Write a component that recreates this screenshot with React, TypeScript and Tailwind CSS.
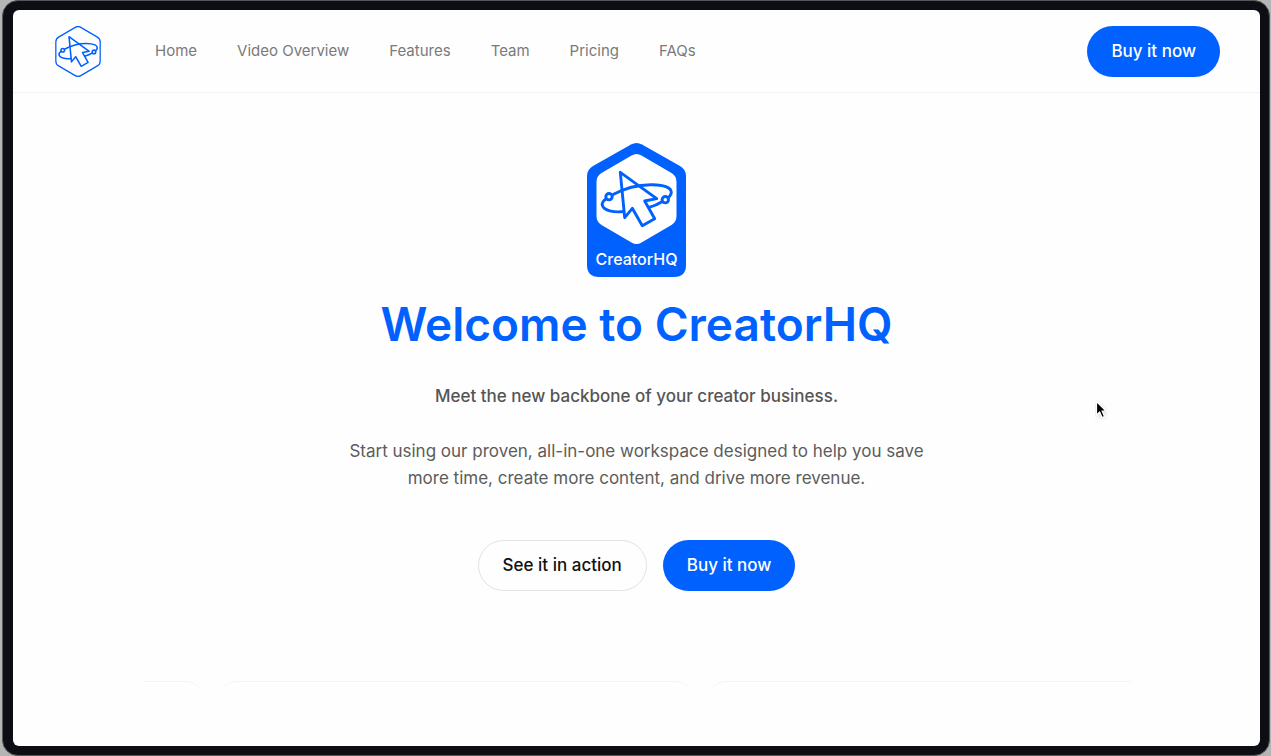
import { Star } from 'lucide-react';

const navLinks = [
  { label: 'Home', href: '#home' },
  { label: 'Video Overview', href: '#video' },
  { label: 'Features', href: '#features' },
  { label: 'Team', href: '#team' },
  { label: 'Pricing', href: '#pricing' },
  { label: 'FAQs', href: '#faqs' },
];

const hexagon =
  'M44.5 12.5Q49.5 9.5 54.5 12.5L84.5 30Q89.5 33 89.5 39V73Q89.5 79 84.5 82L54.5 99.5Q49.5 102.5 44.5 99.5L14.5 82Q9.5 79 9.5 73V39Q9.5 33 14.5 30Z';

function OrbitCursor() {
  return (
    <g fill="none" stroke="#0061ff" strokeLinejoin="round">
      <path d="M33.3 29.3L69.7 55.7L57.7 58L67.7 75.7L55.3 82.7L45.3 65.3L37.7 74.7Z" />
      <path d="M25 52C37 45.5 52 41.5 65 41.7C76 41.9 84.3 43.5 84.3 49.5C84.3 51.5 82.5 53.5 81 55" />
      <path d="M75.5 58.5C71.5 61 67 63 61.3 64.7" />
      <path d="M19.5 55.5C16.5 57.5 14.6 60 15.4 62.5C17 67.5 26 69.8 37.3 68.5" />
      <circle cx="22" cy="53.7" r="3.2" fill="#fff" />
      <circle cx="78.3" cy="56.7" r="3.2" fill="#fff" />
    </g>
  );
}

function LogoMark() {
  return (
    <svg width="50" height="51" viewBox="5 10 89 92" strokeWidth="2.8" aria-hidden="true">
      <path d={hexagon} fill="none" stroke="#0061ff" strokeWidth="2.3" />
      <OrbitCursor />
    </svg>
  );
}

function LogoBadge() {
  return (
    <svg width="99" height="134" viewBox="0 0 99 134" strokeWidth="2.9" role="img">
      <path
        d="M44 1.5Q49.5 -1.5 55 1.5L93 23Q99 26.5 99 33V122Q99 134 87 134H12Q0 134 0 122V33Q0 26.5 6 23Z"
        fill="#0061ff"
      />
      <path d={hexagon} fill="#fff" />
      <OrbitCursor />
      <text x="49.5" y="122" textAnchor="middle" fill="#fff" className="text-[16px] font-medium">
        CreatorHQ
      </text>
    </svg>
  );
}

function Header() {
  return (
    <header className="flex items-center justify-between border-b border-[#f2f2f2] px-10 pt-4 pb-[15px]">
      <div className="flex items-center gap-13">
        <a href="#home" aria-label="CreatorHQ">
          <LogoMark />
        </a>
        <nav className="flex items-center gap-10 text-[15px] text-[#7a7a7a]">
          {navLinks.map((link) => (
            <a key={link.label} href={link.href}>
              {link.label}
            </a>
          ))}
        </nav>
      </div>
      <button className="h-[51px] rounded-full bg-[#0061ff] px-6 text-[17px] font-medium text-white">
        Buy it now
      </button>
    </header>
  );
}

function Hero() {
  return (
    <section className="flex flex-col items-center pt-[50px] text-center">
      <LogoBadge />
      <h1 className="mt-4 text-[46px] leading-[62px] font-semibold text-[#0061ff]">Welcome to CreatorHQ</h1>
      <p className="mt-7 text-[17px] leading-[27px] font-medium text-[#555]">
        Meet the new backbone of your creator business.
      </p>
      <p className="mt-7 max-w-[600px] text-[17px] leading-[27px] text-[#5c5c5c]">
        Start using our proven, all-in-one workspace designed to help you save more time, create more content, and
        drive more revenue.
      </p>
      <div className="mt-12 flex gap-4">
        <button className="h-[51px] rounded-full border border-[#e2e2e2] px-6 text-[17px] font-medium text-[#111]">
          See it in action
        </button>
        <button className="h-[51px] rounded-full bg-[#0061ff] px-6 text-[17px] font-medium text-white">
          Buy it now
        </button>
      </div>
    </section>
  );
}

function Card({ rating = 0 }: { rating?: number }) {
  return (
    <div className="relative h-60 w-[474px] shrink-0">
      <div className="absolute inset-0 rounded-2xl border border-[#f2f2f2] mask-b-from-0% mask-b-to-[12px]" />
      <div className="flex justify-center gap-1.5 pt-16">
        {Array.from({ length: rating }, (_, i) => (
          <Star key={i} className="size-6 fill-[#ffb84d] text-[#ffb84d]" />
        ))}
      </div>
    </div>
  );
}

function Testimonials() {
  return (
    <section className="mx-auto mt-[90px] flex min-h-0 w-full max-w-[988px] flex-1 gap-4 overflow-hidden">
      <div className="-ml-[414px] flex gap-4">
        <Card />
        <Card />
        <Card rating={5} />
      </div>
    </section>
  );
}

function Pointer() {
  return (
    <svg className="absolute top-[390px] left-[1082px]" width="14" height="20" viewBox="0 0 14 20" aria-hidden="true">
      <path
        d="M1.5 1.5V15L4.7 12L7 17.6L9.5 16.5L7.2 11.2H11.3Z"
        fill="#000"
        stroke="#fff"
        strokeWidth="1.2"
        className="drop-shadow-sm"
      />
    </svg>
  );
}

export default function App() {
  return (
    <div className="h-screen bg-[#b4b4b4] pr-px pl-[2px] font-['Inter','Liberation_Sans',sans-serif]">
      <div className="h-full rounded-2xl border border-[#55575a] bg-[#0d0e13] py-[9px] pr-[9px] pl-[10px]">
        <div className="relative flex h-full flex-col overflow-hidden rounded-md bg-[#fefefe]">
          <Header />
          <Hero />
          <Testimonials />
          <Pointer />
        </div>
      </div>
    </div>
  );
}
